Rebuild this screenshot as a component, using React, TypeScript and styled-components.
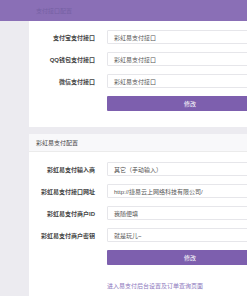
import React from "react";
import styled, {createGlobalStyle} from "styled-components";

const GlobalStyle = createGlobalStyle`
    html, body {
        margin: 0;
        padding: 0;
        width: 247px;
        height: 296px;
        overflow: hidden;
        background: #ecebf0;
        font-family: "Liberation Sans", "Noto Sans CJK SC", sans-serif;
    }
`

const TopBar = styled.div`
    height: 21px;
    background: #8a6fb6;
    display: flex;
    align-items: center;
    padding-left: 36px;
    font-size: 6px;
    color: #7560a3;
`

const Main = styled.div`
    display: flex;
`

const Side = styled.div`
    width: 29px;
    flex-shrink: 0;
`

const Content = styled.div`
    width: 260px;
    flex-shrink: 0;
`

const Card = styled.div<{ $gap?: number }>`
    background: #fff;
    margin-top: ${p => p.$gap || 0}px;
`

const CardHead = styled.div`
    height: 17px;
    border-bottom: 1px solid #ebebeb;
    background: #f8f8fa;
    display: flex;
    align-items: center;
    padding-left: 7px;
    font-size: 6px;
    color: #444;
`

const CardBody = styled.div<{ $top: number, $bottom: number }>`
    padding: ${p => p.$top}px 0 ${p => p.$bottom}px;
    display: flex;
    flex-direction: column;
    gap: 8px;
`

const Row = styled.div`
    display: grid;
    grid-template-columns: 66px 166px;
    column-gap: 12px;
    align-items: center;
`

const Label = styled.label`
    text-align: right;
    font-size: 6px;
    font-weight: bold;
    color: #444;
    white-space: nowrap;
`

const Input = styled.div`
    height: 12px;
    border: 1px solid #e6e6ea;
    border-radius: 1px;
    padding-left: 6px;
    display: flex;
    align-items: center;
    font-size: 6px;
    color: #555;
    white-space: nowrap;
`

const Button = styled.div`
    grid-column: 2;
    height: 15px;
    background: #7d5fae;
    border-radius: 1px;
    display: flex;
    align-items: center;
    justify-content: center;
    font-size: 6px;
    color: #fff;
`

const LinkRow = styled.div`
    margin-top: 8px;
    padding-left: 78px;
    font-size: 6px;
    color: #8c77bd;
    white-space: nowrap;
`

const Field = ({label, value}: { label: string, value: string }) => (
    <Row>
        <Label>{label}</Label>
        <Input>{value}</Input>
    </Row>
)

const App = () => {
    return (
        <>
            <GlobalStyle/>
            <TopBar>支付接口配置</TopBar>
            <Main>
                <Side/>
                <Content>
                    <Card>
                        <CardBody $top={9} $bottom={16}>
                            <Field label="支付宝支付接口" value="彩虹易支付接口"/>
                            <Field label="QQ钱包支付接口" value="彩虹易支付接口"/>
                            <Field label="微信支付接口" value="彩虹易支付接口"/>
                            <Row><Button>修改</Button></Row>
                        </CardBody>
                    </Card>
                    <Card $gap={7}>
                        <CardHead>彩虹易支付配置</CardHead>
                        <CardBody $top={10} $bottom={40}>
                            <Field label="彩虹易支付输入商" value="其它（手动输入）"/>
                            <Field label="彩虹易支付接口网址" value="http://捷易云上网络科技有限公司/"/>
                            <Field label="彩虹易支付商户ID" value="我随便填"/>
                            <Field label="彩虹易支付商户密钥" value="就是玩儿~"/>
                            <Row><Button>修改</Button></Row>
                            <LinkRow>进入易支付后台设置及订单查询页面</LinkRow>
                        </CardBody>
                    </Card>
                </Content>
            </Main>
        </>
    )
}

export default App
